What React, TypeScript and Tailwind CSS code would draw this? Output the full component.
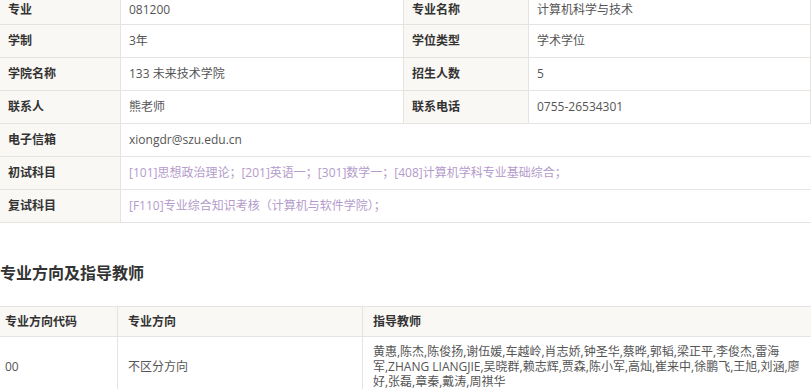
const FONT = '"Open Sans", "Noto Sans CJK SC", "Liberation Sans", sans-serif';

function Label({ children, first }: { children: React.ReactNode; first?: boolean }) {
  return (
    <div
      className={`flex items-center border-b border-r border-[#e6e4e0] bg-[#faf8f4] pl-2 text-[12px] font-bold text-[#333] ${
        first ? 'h-[25px] pb-[5px]' : 'h-[33px]'
      }`}
    >
      {children}
    </div>
  );
}

function Value({
  children,
  wide,
  purple,
  first,
}: {
  children: React.ReactNode;
  wide?: boolean;
  purple?: boolean;
  first?: boolean;
}) {
  return (
    <div
      className={`flex items-center border-b border-[#e6e4e0] bg-white pl-2 text-[12px] ${
        wide ? 'col-span-3' : 'border-r'
      } ${purple ? 'text-[#b49bcb]' : 'text-[#555]'} ${first ? 'h-[25px] pb-[5px]' : 'h-[33px]'}`}
    >
      {children}
    </div>
  );
}

export default function App() {
  const teacherLines = [
    '黄惠,陈杰,陈俊扬,谢伍媛,车越岭,肖志娇,钟圣华,蔡晔,郭韬,梁正平,李俊杰,雷海',
    '军,ZHANG LIANGJIE,吴晓群,赖志辉,贾森,陈小军,高灿,崔来中,徐鹏飞,王旭,刘涵,廖',
    '好,张磊,章秦,戴涛,周祺华',
  ];

  return (
    <div className="h-[389px] w-[811px] overflow-hidden bg-white" style={{ fontFamily: FONT }}>
      <div className="grid grid-cols-[121px_283px_125px_282px]">
        <Label first>专业</Label>
        <Value first>081200</Value>
        <Label first>专业名称</Label>
        <Value first>计算机科学与技术</Value>

        <Label>学制</Label>
        <Value>3年</Value>
        <Label>学位类型</Label>
        <Value>学术学位</Value>

        <Label>学院名称</Label>
        <Value>133 未来技术学院</Value>
        <Label>招生人数</Label>
        <Value>5</Value>

        <Label>联系人</Label>
        <Value>熊老师</Value>
        <Label>联系电话</Label>
        <Value>0755-26534301</Value>

        <Label>电子信箱</Label>
        <Value wide>xiongdr@szu.edu.cn</Value>

        <Label>初试科目</Label>
        <Value wide purple>
          [101]思想政治理论；[201]英语一；[301]数学一；[408]计算机学科专业基础综合；
        </Value>

        <Label>复试科目</Label>
        <Value wide purple>
          [F110]专业综合知识考核（计算机与软件学院）；
        </Value>
      </div>

      <h2 className="mt-[39px] text-[16px] font-bold leading-[22px] text-[#333]">专业方向及指导教师</h2>

      <div className="mt-[22px] grid grid-cols-[118px_245px_448px] border-t border-[#e6e4e0]">
        <div className="flex h-[30px] items-center border-b border-r border-[#e6e4e0] bg-[#faf8f4] pl-[5px] text-[12px] font-bold text-[#333]">
          专业方向代码
        </div>
        <div className="flex h-[30px] items-center border-b border-r border-[#e6e4e0] bg-[#faf8f4] pl-[10px] text-[12px] font-bold text-[#333]">
          专业方向
        </div>
        <div className="flex h-[30px] items-center border-b border-[#e6e4e0] bg-[#faf8f4] pl-[10px] text-[12px] font-bold text-[#333]">
          指导教师
        </div>

        <div className="flex items-center border-b border-r border-[#e6e4e0] pl-[5px] text-[12px] text-[#555]">00</div>
        <div className="flex items-center border-b border-r border-[#e6e4e0] pl-[10px] text-[12px] text-[#555]">
          不区分方向
        </div>
        <div className="border-b border-[#e6e4e0] pb-[8px] pl-[10px] pt-[7px] text-[12px] leading-[15px] text-[#555]">
          {teacherLines.map((line) => (
            <div key={line} className="whitespace-nowrap">
              {line}
            </div>
          ))}
        </div>
      </div>
    </div>
  );
}
